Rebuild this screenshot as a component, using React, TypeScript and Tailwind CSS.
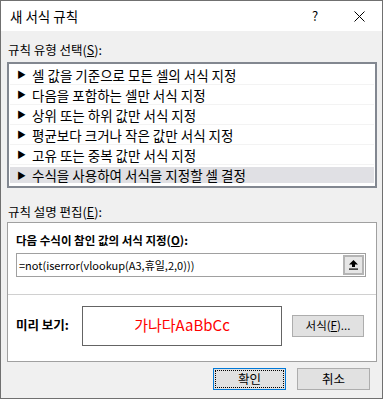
import React from 'react';

const ruleTypes = [
  '셀 값을 기준으로 모든 셀의 서식 지정',
  '다음을 포함하는 셀만 서식 지정',
  '상위 또는 하위 값만 서식 지정',
  '평균보다 크거나 작은 값만 서식 지정',
  '고유 또는 중복 값만 서식 지정',
  '수식을 사용하여 서식을 지정할 셀 결정',
];

const font = { fontFamily: '"Noto Sans CJK KR", "Noto Sans", sans-serif' };

const App: React.FC = () => {
  const selected = 5;

  return (
    <div className="w-[383px] h-[399px] border border-[#707070] bg-[#f0f0f0] text-[12.5px] text-black flex flex-col" style={font}>
      {/* title bar */}
      <div className="h-[30px] bg-white flex items-center pl-[9px] shrink-0">
        <span className="text-[13.5px] flex-1">새 서식 규칙</span>
        <span className="text-[13px] w-[44px] text-center">?</span>
        <div className="w-[45px] flex justify-center items-center pr-[1px]">
          <svg width="11" height="11" viewBox="0 0 11 11">
            <path d="M0.5 0.5 L10.5 10.5 M10.5 0.5 L0.5 10.5" stroke="#000" strokeWidth="1" />
          </svg>
        </div>
      </div>

      <div className="flex-1 px-[6px] pt-[11px]">
        <div className="h-[16px] leading-[16px] pl-[1px]">
          규칙 유형 선택(<span className="underline">S</span>):
        </div>
        <div className="mt-[4px] h-[126px] border-2 border-[#828790] bg-white p-[1px] w-[370px]">
          {ruleTypes.map((r, i) => (
            <div key={r} className="h-[20px] flex items-center border-b border-[#f3f3f3] last:border-b-0">
              <div className={`h-[16px] w-full flex items-center pl-[7px] ${i === selected ? 'bg-[#e0e0e4]' : ''}`}>
                <span className="text-[9px] mr-[6px] leading-none">▶</span>
                <span className="leading-[16px] text-[13.5px]">{r}</span>
              </div>
            </div>
          ))}
        </div>

        <div className="mt-[16px] h-[16px] leading-[16px] pl-[1px]">
          규칙 설명 편집(<span className="underline">E</span>):
        </div>
        <div className="mt-[2px] w-[370px] h-[140px] border border-[#a0a0a0] bg-white flex flex-col">
          <div className="h-[72px] px-[8px] border-b border-[#d0d0d0]">
            <div className="mt-[9px] h-[16px] leading-[16px] font-bold text-[11.5px]">
              다음 수식이 참인 값의 서식 지정(<span className="underline">O</span>):
            </div>
            <div className="mt-[5px] h-[24px] w-[350px] border border-[#a0a0a0] flex items-center pl-[2px] pr-[1px]">
              <span className="flex-1 text-[11px]">
                =not(iserror(vlookup(A3,휴일,2,0)))
              </span>
              <div className="w-[21px] h-[20px] border-2 border-[#b4b4b4] bg-[#e6e6e6] flex items-center justify-center">
                <svg width="9" height="10" viewBox="0 0 9 10">
                  <path d="M4.5 0 L9 4.5 L6 4.5 L6 7 L3 7 L3 4.5 L0 4.5 Z" fill="#000" />
                  <rect x="0" y="8.5" width="9" height="1.2" fill="#000" />
                </svg>
              </div>
            </div>
          </div>
          <div className="flex-1 flex items-center px-[8px] pb-[5px]">
            <div className="w-[66px] font-bold">미리 보기:</div>
            <div className="w-[200px] h-[40px] border border-[#646464] flex items-center justify-center text-[#ff0000] text-[15px]">
              가나다AaBbCc
            </div>
            <div className="ml-[10px] w-[72px] h-[22px] border border-[#adadad] bg-[#e1e1e1] flex items-center justify-center text-[11.5px]">
              서식(<span className="underline">F</span>)...
            </div>
          </div>
        </div>

        <div className="mt-[6px] flex justify-end gap-[11px] pr-[6px]">
          <div className="w-[73px] h-[22px] border border-[#0078d7] bg-[#e1e1e1] p-[1px]">
            <div className="w-full h-full border border-dotted border-black flex items-center justify-center text-[12.5px]">확인</div>
          </div>
          <div className="w-[73px] h-[22px] border border-[#adadad] bg-[#e1e1e1] flex items-center justify-center text-[12.5px]">취소</div>
        </div>
      </div>
    </div>
  );
};

export default App;
